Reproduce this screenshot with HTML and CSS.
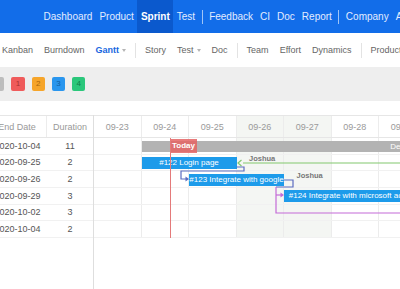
FILE: index.html
```html
<!DOCTYPE html>
<html lang="en">
<head>
<meta charset="utf-8">
<title>Sprint Gantt</title>
<link rel="stylesheet" href="styles.css">
</head>
<body>
<header class="topnav">
  <a class="nav-item">Dashboard</a>
  <a class="nav-item">Product</a>
  <a class="nav-item active">Sprint</a>
  <a class="nav-item">Test</a>
  <span class="nav-sep"></span>
  <a class="nav-item">Feedback</a>
  <a class="nav-item">CI</a>
  <a class="nav-item">Doc</a>
  <a class="nav-item">Report</a>
  <span class="nav-sep"></span>
  <a class="nav-item">Company</a>
  <a class="nav-item">Admin</a>
</header>

<nav class="subnav">
  <a class="sub-item">Kanban</a>
  <a class="sub-item">Burndown</a>
  <a class="sub-item active">Gantt<span class="caret"></span></a>
  <span class="sub-sep"></span>
  <a class="sub-item">Story</a>
  <a class="sub-item">Test<span class="caret"></span></a>
  <a class="sub-item">Doc</a>
  <span class="sub-sep"></span>
  <a class="sub-item">Team</a>
  <a class="sub-item">Effort</a>
  <a class="sub-item">Dynamics</a>
  <span class="sub-sep"></span>
  <a class="sub-item">Product</a>
</nav>

<div class="toolbar">
  <span class="lvl lvl-0">0</span>
  <span class="lvl lvl-1">1</span>
  <span class="lvl lvl-2">2</span>
  <span class="lvl lvl-3">3</span>
  <span class="lvl lvl-4">4</span>
</div>

<section class="gantt">
  <div class="grid-left">
    <div class="gl-head"><div class="c-end">End Date</div><div class="c-dur">Duration</div></div>
    <div class="gl-row"><div>2020-10-04</div><div>11</div></div>
    <div class="gl-row"><div>2020-09-25</div><div>2</div></div>
    <div class="gl-row"><div>2020-09-26</div><div>2</div></div>
    <div class="gl-row"><div>2020-09-29</div><div>3</div></div>
    <div class="gl-row"><div>2020-10-02</div><div>3</div></div>
    <div class="gl-row"><div>2020-10-04</div><div>2</div></div>
  </div>

  <div class="chart">
    <div class="chart-head">
      <div class="day">09-23</div>
      <div class="day">09-24</div>
      <div class="day">09-25</div>
      <div class="day weekend">09-26</div>
      <div class="day weekend">09-27</div>
      <div class="day">09-28</div>
      <div class="day">09-29</div>
      <div class="day">09-30</div>
      <div class="day">10-01</div>
      <div class="day">10-02</div>
      <div class="day weekend">10-03</div>
      <div class="day weekend">10-04</div>
    </div>
    <div class="chart-body">
      <div class="cols">
        <div class="col"></div>
        <div class="col"></div>
        <div class="col"></div>
        <div class="col weekend"></div>
        <div class="col weekend"></div>
        <div class="col"></div>
        <div class="col"></div>
        <div class="col"></div>
        <div class="col"></div>
        <div class="col"></div>
        <div class="col weekend"></div>
        <div class="col weekend"></div>
      </div>
      <div class="rowlines">
        <div class="rowline"></div>
        <div class="rowline"></div>
        <div class="rowline"></div>
        <div class="rowline"></div>
        <div class="rowline"></div>
        <div class="rowline"></div>
      </div>
      <div class="bars">
        <div class="bar bar-group" style="grid-row:1;grid-column:2 / span 11">Design</div>
        <div class="today-flag" style="grid-row:1;grid-column:2">Today</div>
        <div class="bar" style="grid-row:2;grid-column:2 / span 2">#122 Login page</div>
        <div class="owner" style="grid-row:2;grid-column:4 / span 2">Joshua</div>
        <div class="bar" style="grid-row:3;grid-column:3 / span 2">#123 Integrate with google</div>
        <div class="owner" style="grid-row:3;grid-column:5 / span 2">Joshua</div>
        <div class="bar" style="grid-row:4;grid-column:5 / span 3">#124 Integrate with microsoft account</div>
        <div class="today-line" style="grid-column:2"></div>
      </div>
      <svg class="links" width="380" height="100" viewBox="0 0 380 100">
        <path d="M149 25 H310" class="l-green"/>
        <polyline points="147.5,22 144,25 147.5,28" class="l-green"/>
        <path d="M142.5 29 H150 V33 H87 V41 H92" class="l-blue"/>
        <polygon points="91.5,38.5 95,41 91.5,43.5" class="f-blue"/>
        <path d="M190 42 H199 V49 H182" class="l-blue"/>
        <path d="M182 49 V75 H310" class="l-purple"/>
        <path d="M182 57 H187" class="l-purple"/>
        <polygon points="186.5,54.5 190,57 186.5,59.5" class="f-purple"/>
      </svg>
    </div>
  </div>
</section>
</body>
</html>
```

FILE: styles.css
```css
* { box-sizing: border-box; }
html, body { margin: 0; padding: 0; }
body {
  width: 400px;
  height: 289px;
  overflow: hidden;
  background: #fff;
  color: #555;
  font-family: "Liberation Sans", Arial, sans-serif;
}
a { text-decoration: none; cursor: pointer; }

/* top navigation */
.topnav {
  display: flex;
  align-items: center;
  height: 33px;
  padding-left: 40px;
  background: #126de9;
  white-space: nowrap;
  overflow: hidden;
}
.nav-item {
  flex: none;
  height: 100%;
  display: flex;
  align-items: center;
  padding: 0 3.5px;
  font-size: 10px;
  color: #e2ecff;
}
.nav-item.active {
  background: #0b59cd;
  color: #fff;
  font-weight: bold;
}
.nav-sep {
  flex: none;
  width: 1px;
  height: 14px;
  margin: 0 3px;
  background: rgba(255, 255, 255, 0.6);
}

/* secondary navigation */
.subnav {
  display: flex;
  align-items: center;
  height: 34px;
  margin-left: -3.5px;
  white-space: nowrap;
  overflow: hidden;
}
.sub-item {
  flex: none;
  display: flex;
  align-items: center;
  padding: 0 5.5px;
  font-size: 9px;
  color: #666;
}
.sub-item.active {
  color: #1766e0;
  font-weight: bold;
}
.caret {
  width: 0;
  height: 0;
  margin-left: 3px;
  border-left: 2.5px solid transparent;
  border-right: 2.5px solid transparent;
  border-top: 3px solid #b5b5b5;
}
.sub-sep {
  flex: none;
  width: 1px;
  height: 15px;
  margin: 0 3.5px;
  background: #e3e3e3;
}

/* toolbar with level switches */
.toolbar {
  display: flex;
  align-items: center;
  gap: 7px;
  height: 34px;
  background: #eeeeee;
}
.lvl {
  flex: none;
  width: 13.3px;
  height: 13.3px;
  border-radius: 2px;
  display: flex;
  align-items: center;
  justify-content: center;
  font-size: 8px;
}
.lvl-0 { margin-left: -9px; background: #bdbdbd; color: #888; }
.lvl-1 { background: #ef5b5b; color: #a83232; }
.lvl-2 { background: #f6a52a; color: #a8660c; }
.lvl-3 { background: #2a96ee; color: #125d9e; }
.lvl-4 { background: #2bc77b; color: #11804a; }

/* gantt */
.gantt {
  display: flex;
  height: 174px;
  margin-top: 14px;
  font-size: 9px;
}
.grid-left {
  flex: none;
  width: 105px;
  margin-left: -12px;
}
.gl-head, .gl-row {
  display: grid;
  grid-template-columns: 59px 46px;
}
.gl-head, .gl-row > div {
  white-space: nowrap;
}
.gl-head {
  height: 23px;
  border-top: 1px solid #e6e6e6;
  border-bottom: 1px solid #e6e6e6;
  color: #999;
}
.gl-head > div, .gl-row > div {
  display: flex;
  align-items: center;
  justify-content: center;
}
.gl-head .c-end { border-right: 1px solid #ececec; }
.gl-row {
  height: 16.667px;
  border-bottom: 1px solid #f1f1f1;
  color: #555;
}

.chart {
  flex: 1;
  min-width: 0;
  overflow: hidden;
  border-left: 1px solid #dedede;
}
.chart-head {
  display: flex;
  height: 23px;
  border-top: 1px solid #e6e6e6;
  border-bottom: 1px solid #e6e6e6;
}
.day {
  flex: none;
  width: 47.5px;
  display: flex;
  align-items: center;
  justify-content: center;
  border-right: 1px solid #ececec;
  color: #9a9a9a;
}
.weekend { background: #f4f6f3; }

.chart-body {
  display: grid;
  width: 570px;
  height: 100px;
}
.chart-body > * { grid-area: 1 / 1; }

.cols { display: flex; height: 100px; }
.col {
  flex: none;
  width: 47.5px;
  border-right: 1px solid #ececec;
}
.rowlines { display: flex; flex-direction: column; }
.rowline {
  height: 16.667px;
  border-bottom: 1px solid #f1f1f1;
}

.bars {
  display: grid;
  grid-template-columns: repeat(12, 47.5px);
  grid-template-rows: repeat(6, 16.667px);
}
.bar {
  align-self: center;
  height: 12px;
  line-height: 12px;
  background: #1d9bea;
  color: #fff;
  font-size: 8px;
  text-align: center;
  white-space: nowrap;
  overflow: hidden;
}
.bar-group {
  height: 11px;
  line-height: 11px;
  background: #b3b3b3;
}
.owner {
  align-self: start;
  margin: 0.5px 0 0 12.5px;
  font-size: 7.5px;
  font-weight: bold;
  line-height: 8px;
  color: #777;
  white-space: nowrap;
}
.today-flag {
  justify-self: start;
  align-self: center;
  width: 27px;
  height: 14px;
  margin-left: 28.5px;
  line-height: 14px;
  background: rgba(228, 100, 100, 0.85);
  color: #fff;
  font-size: 8px;
  font-weight: bold;
  text-align: center;
}
.today-line {
  grid-row: 1 / -1;
  justify-self: start;
  width: 1px;
  margin-left: 28.5px;
  background: #e47a7a;
}

.links { overflow: visible; pointer-events: none; }
.links path, .links polyline { fill: none; stroke-width: 1.2; }
.l-green { stroke: #82c86f; fill: none; stroke-width: 1.3; }
.l-blue { stroke: #5b6cc0; }
.l-purple { stroke: #c46bd8; }
.f-blue { fill: #5b6cc0; }
.f-purple { fill: #c46bd8; }
```
